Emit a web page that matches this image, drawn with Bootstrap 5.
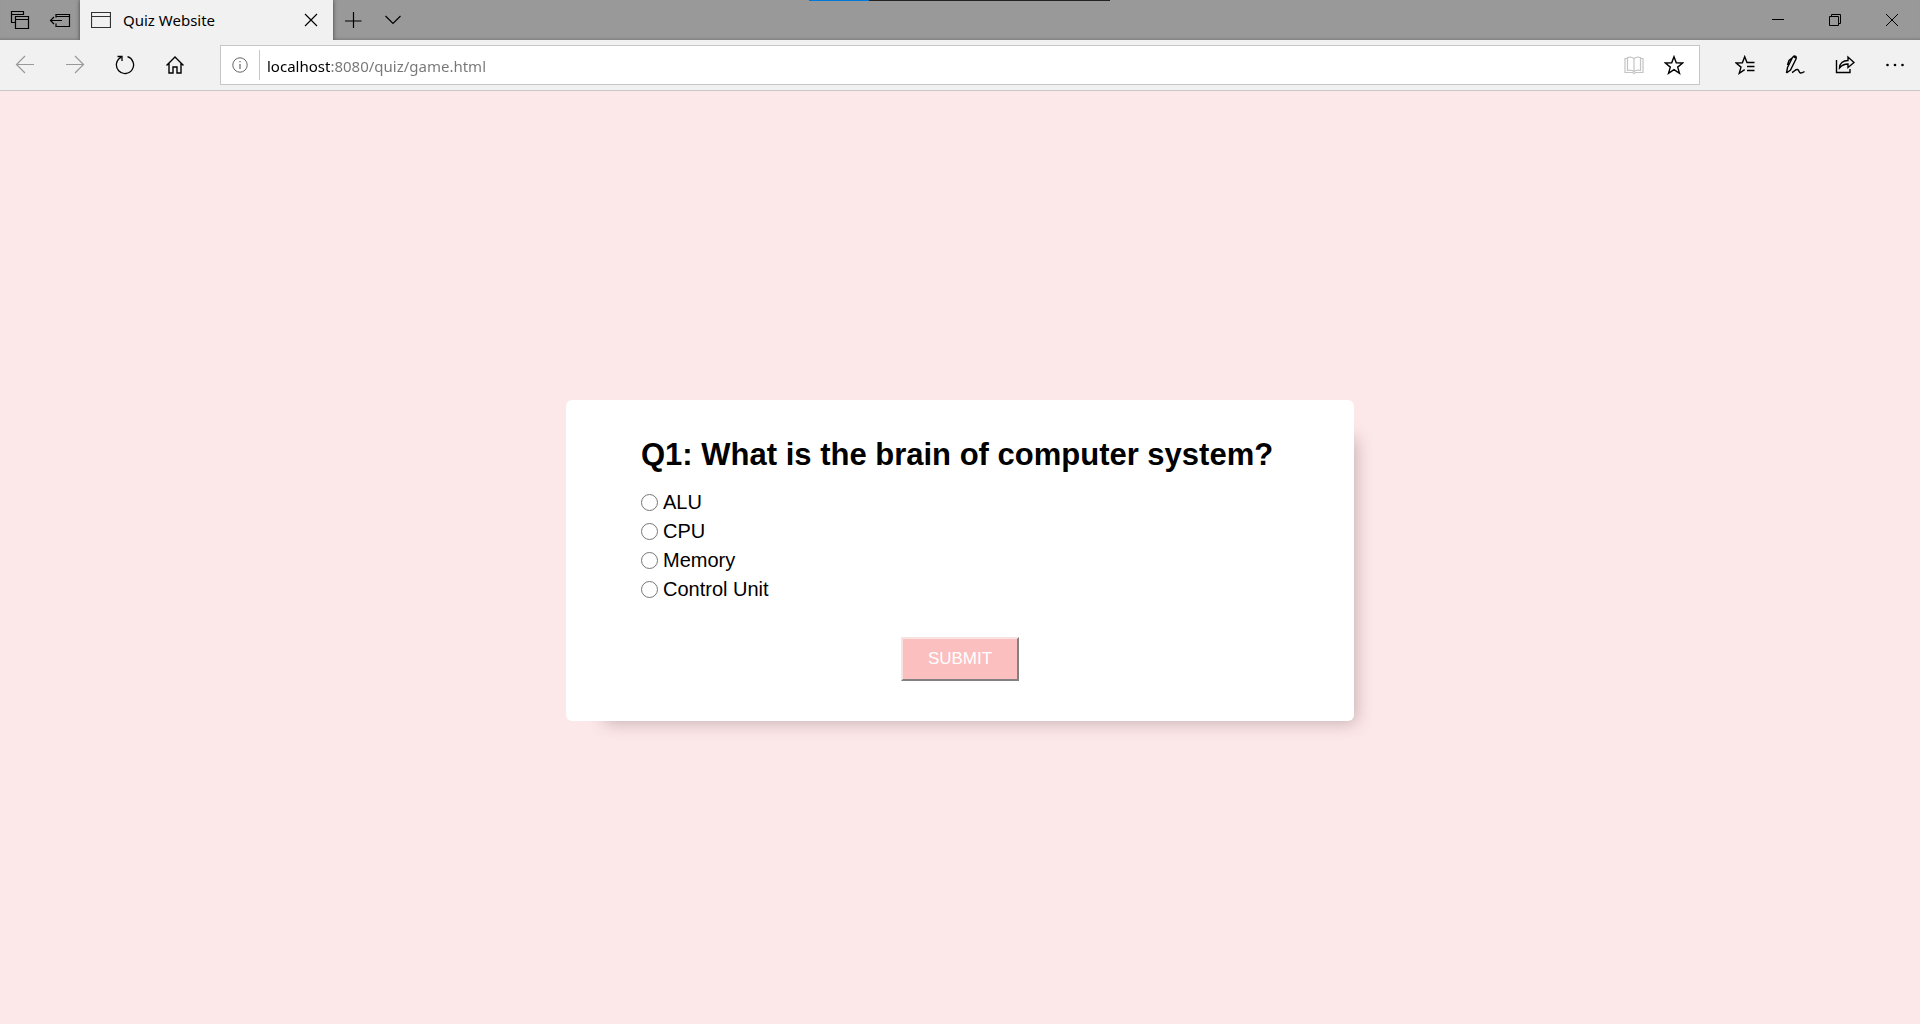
<!DOCTYPE html>
<html lang="en">
<head>
<meta charset="utf-8">
<meta name="viewport" content="width=device-width, initial-scale=1">
<title>Quiz Website</title>
<link href="https://cdn.jsdelivr.net/npm/bootstrap@5.3.0/dist/css/bootstrap.min.css" rel="stylesheet">
<style>
  body { background: #fde8e9; color: #000; font-family: "Liberation Sans", Arial, sans-serif; }
  svg { display: block; fill: none; stroke: #000; stroke-width: 1.2; }
  .browser-ui { font-family: "Noto Sans", "Open Sans", sans-serif; }
  .title-strip { height: 40px; background: #999; box-shadow: inset 0 -3px 3px -2px rgba(0,0,0,.2); }
  .page-tab { width: 253px; background: #f1f1f1; padding: 0 15px 0 11px; font-size: 15px; line-height: 20px; box-shadow: 0 0 4px rgba(0,0,0,.6); clip-path: inset(0 -5px); }
  .ui-btn { border: 0; padding: 0; background: none; display: flex; align-items: center; justify-content: center; align-self: stretch; }
  .w-tab { width: 40px; }
  .w-win { width: 57px; }
  .w-tool { width: 50px; }
  .capture-bar { top: 0; left: 50%; width: 301px; height: 1px; margin-left: -151px; background: linear-gradient(90deg, #0078d7 60px, #222 60px); }
  .tool-strip { height: 51px; background: #f1f1f1; border-bottom: 1px solid #c8c8c8; }
  .address { height: 40px; margin: 0 20px; padding-right: 5px; background: #fff; border: 1px solid #c6c6c6; }
  .site-info { width: 39px; height: 30px; border-right: 1px solid #c6c6c6; }
  .url-field { border: 0; outline: 0; padding: 2px 0 0 7px; font-size: 15px; line-height: 24px; min-width: 0; color: transparent; background: linear-gradient(90deg, #000 71px, #767676 71px); -webkit-background-clip: text; background-clip: text; }
  .quiz-area { padding-top: 6px; }
  .quiz-box { width: 788px; max-width: 100%; padding: 35px 75px 40px; background: #fff; border-radius: 6px; box-shadow: 20px 20px 16px -18px rgba(60,30,30,.28); }
  .question { font-size: 31px; line-height: 40px; font-weight: 700; margin: 0 0 13px; }
  .choice { height: 29px; font-size: 20px; line-height: 29px; gap: 5px; }
  .choice input { appearance: none; width: 17px; height: 17px; margin: 0; border: 1px solid #767676; border-radius: 50%; background: #fff; }
  .choice input:checked { border: 5px solid #0075ff; }
  .submit-btn { width: 118px; height: 44px; margin-top: 33px; padding: 0; font-size: 17px; line-height: 24px; color: #fff; background: #fbbfbf; border: 2px solid; border-color: #f8e3e3 #858080 #858080 #f8e3e3; }
</style>
</head>
<body class="d-flex flex-column min-vh-100">
<header class="browser-ui">
  <div class="title-strip d-flex align-items-stretch position-relative">
    <div class="capture-bar position-absolute"></div>
    <button class="ui-btn w-tab" type="button" aria-label="Tabs you've set aside"><svg width="20" height="20"><path d="M5.500 12.500H1.500V1.500H13.500V5M1.500 4.500H13.500M5.500 6.500H18.500V18.500H5.500ZM5.500 9.500H18.500"/></svg></button>
    <button class="ui-btn w-tab" type="button" aria-label="Set these tabs aside"><svg width="22" height="20"><path d="M7 7.500V4.500H20.500V16.500H7V13.500M7 6.500H20.500M1.500 10.500H13M5 7L1.500 10.500L5 14"/></svg></button>
    <div class="page-tab d-flex align-items-center">
      <svg width="20" height="18" class="me-2"><path d="M.5 1.500H19.500V16.500H.5ZM.5 5.500H19.500" stroke="#333"/></svg>
      <span class="flex-grow-1 ps-1">Quiz Website</span>
      <button class="ui-btn" type="button" aria-label="Close tab"><svg width="14" height="14"><path d="M1 1L13 13M13 1L1 13"/></svg></button>
    </div>
    <button class="ui-btn w-tab" type="button" aria-label="New tab"><svg width="18" height="18"><path d="M9.500 1V17M1 10H17.500"/></svg></button>
    <button class="ui-btn w-tab" type="button" aria-label="Show tab previews"><svg width="18" height="12"><path d="M1.500 2L9 9.500L16.500 2"/></svg></button>
    <div class="ms-auto d-flex">
      <button class="ui-btn w-win" type="button" aria-label="Minimize"><svg width="14" height="14"><path d="M1 6.500H13" stroke-width="1"/></svg></button>
      <button class="ui-btn w-win" type="button" aria-label="Restore"><svg width="14" height="14"><path d="M1.500 3.500H10.500V12.500H1.500ZM3.500 3.500V1.500H12.500V10.500H10.500" stroke-width="1"/></svg></button>
      <button class="ui-btn w-win" type="button" aria-label="Close"><svg width="14" height="14"><path d="M1 1L13 13M13 1L1 13" stroke-width="1"/></svg></button>
    </div>
  </div>
  <div class="tool-strip d-flex align-items-center">
    <button class="ui-btn w-tool" type="button" aria-label="Back"><svg width="20" height="20"><path d="M19 9.500H1.500M10 1L1.500 9.500L10 18" stroke="#999"/></svg></button>
    <button class="ui-btn w-tool" type="button" aria-label="Forward"><svg width="20" height="20"><path d="M1 9.500H18.500M10 1L18.500 9.500L10 18" stroke="#999"/></svg></button>
    <button class="ui-btn w-tool" type="button" aria-label="Refresh"><svg width="20" height="20"><path d="M12.500 1.700A8.600 8.600 0 1 1 6 2.300M2.500 1.500H7V6" stroke-width="1.300"/></svg></button>
    <button class="ui-btn w-tool" type="button" aria-label="Home"><svg width="20" height="20"><path d="M1.500 10.500L10 2L18.500 10.500M4 8.500V18H8V12H12V18H16V8.500" stroke-width="1.400"/></svg></button>
    <div class="address d-flex flex-grow-1 align-items-center">
      <button class="ui-btn site-info align-self-center" type="button" aria-label="Site information"><svg width="16" height="16"><circle cx="8" cy="8" r="7.200" stroke="#666" stroke-width="1"/><path d="M8 7V12M8 4V5.300" stroke="#666" stroke-width="1.200"/></svg></button>
      <input class="url-field flex-grow-1" type="text" aria-label="Address" value="localhost:8080/quiz/game.html">
      <button class="ui-btn w-tab" type="button" aria-label="Reading view"><svg width="20" height="20"><path d="M10 3.500C8 1.800 5.500 1.800 3.500 2.500V15.500C5.500 14.800 8 14.800 10 16.500C12 14.800 14.500 14.800 16.500 15.500V2.500C14.500 1.800 12 1.800 10 3.500V16.500M3.500 3.500H1V17.500H8.500L10 18.500L11.500 17.500H19V3.500H16.500" stroke="#c4c4c4"/></svg></button>
      <button class="ui-btn w-tab" type="button" aria-label="Add to favorites"><svg width="20" height="20"><path d="M10 1.700L12.300 7.700L18.700 8L13.700 12.100L15.500 18.300L10 14.700L4.500 18.300L6.300 12.100L1.300 8L7.700 7.700Z" stroke-width="1.400"/></svg></button>
    </div>
    <button class="ui-btn w-tool" type="button" aria-label="Favorites"><svg width="20" height="20"><path d="M19.500 7.500H12L9.700 1.700L7.400 7.700L1 8L6 12.100L4.200 18.300L9.700 14.700M12 11.500H19.500M12 15.500H19.500" stroke-width="1.400"/></svg></button>
    <button class="ui-btn w-tool" type="button" aria-label="Add notes"><svg width="20" height="22"><path d="M1.500 19L2.500 13.500L7.500 3.500C9 1 12 2 11 5L5.500 16L1.500 19M8 2.500L11.500 4.500M7 4L4 6.500L2.500 11M7 18.500C9.500 17.500 10.500 15 12.500 15.500C14.500 16 13.500 18.500 15.500 19C17 19.300 18 18.500 19.500 17.500" stroke-width="1.400"/></svg></button>
    <button class="ui-btn w-tool" type="button" aria-label="Share"><svg width="20" height="20"><path d="M1.500 5V17.500H15V14M4.500 13C4.500 8.500 8 5.500 13 5.500V2L19 7.500L13 12.500V9C9.500 9 6.500 10.500 4.500 13Z" stroke-width="1.400"/></svg></button>
    <button class="ui-btn w-tool" type="button" aria-label="Settings and more"><svg width="20" height="6"><g fill="#000" stroke="none"><circle cx="2.500" cy="3" r="1.300"/><circle cx="10" cy="3" r="1.300"/><circle cx="17.500" cy="3" r="1.300"/></g></svg></button>
  </div>
</header>
<main class="quiz-area flex-grow-1 d-flex align-items-center justify-content-center">
  <form class="quiz-box d-flex flex-column" onsubmit="return false">
    <h1 class="question text-nowrap">Q1: What is the brain of computer system?</h1>
    <div>
      <div class="choice d-flex align-items-center"><input type="radio" name="answer" id="a1"><label for="a1">ALU</label></div>
      <div class="choice d-flex align-items-center"><input type="radio" name="answer" id="a2"><label for="a2">CPU</label></div>
      <div class="choice d-flex align-items-center"><input type="radio" name="answer" id="a3"><label for="a3">Memory</label></div>
      <div class="choice d-flex align-items-center"><input type="radio" name="answer" id="a4"><label for="a4">Control Unit</label></div>
    </div>
    <button class="submit-btn align-self-center" type="submit">SUBMIT</button>
  </form>
</main>
<script src="https://cdn.jsdelivr.net/npm/bootstrap@5.3.0/dist/js/bootstrap.bundle.min.js"></script>
</body>
</html>
